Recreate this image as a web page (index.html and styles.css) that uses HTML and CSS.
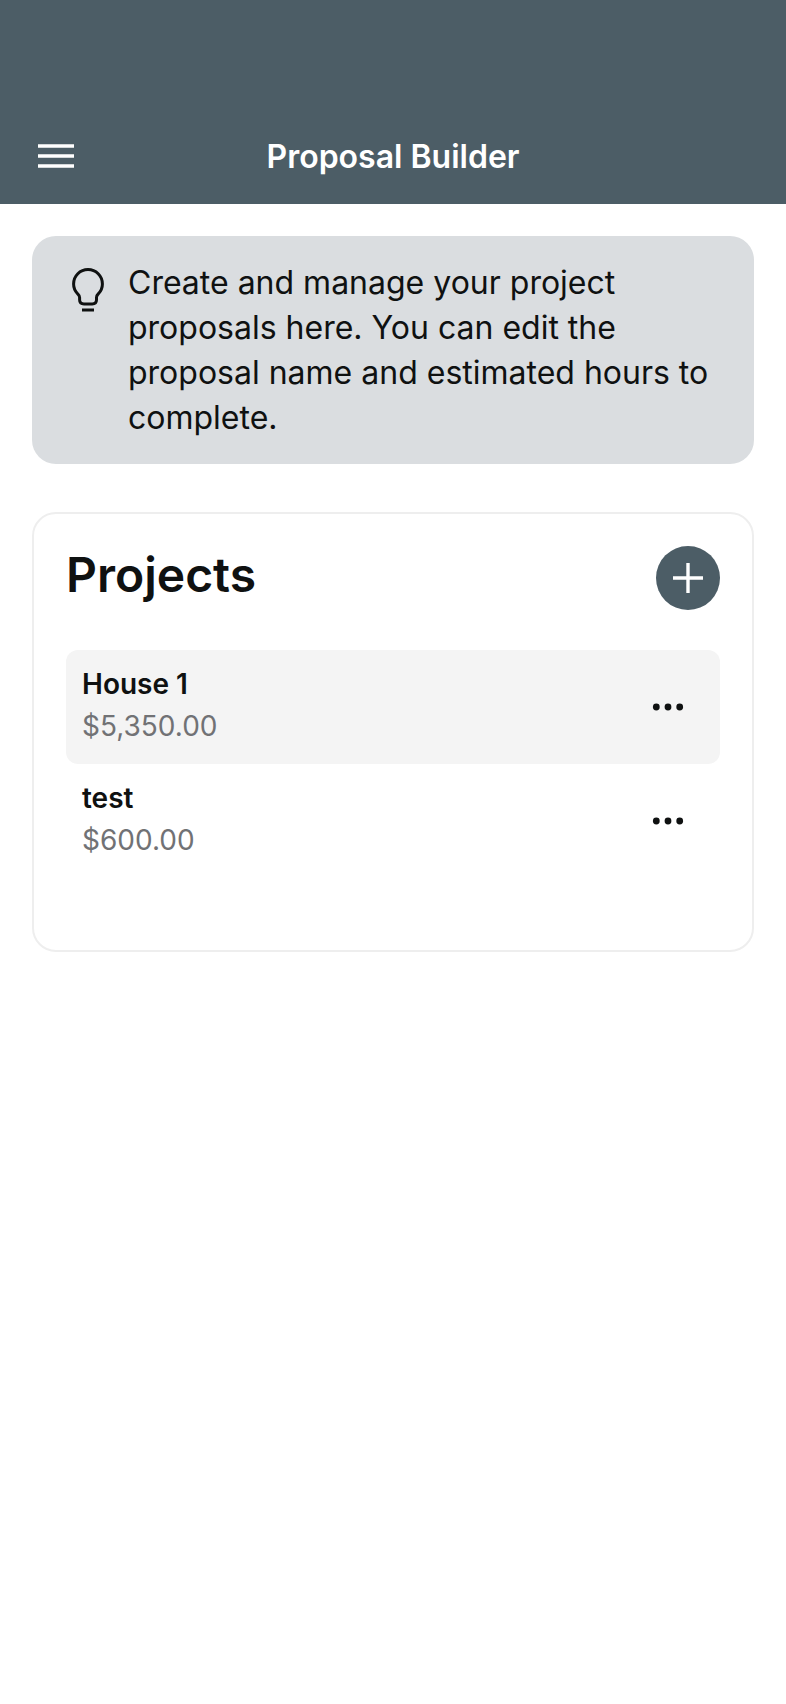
FILE: index.html
```html
<!DOCTYPE html>
<html lang="en">
<head>
<meta charset="utf-8">
<meta name="viewport" content="width=device-width, initial-scale=1">
<title>Proposal Builder</title>
<link rel="stylesheet" href="styles.css">
</head>
<body>
<header class="app-bar">
  <button class="icon-button menu" type="button" aria-label="Open menu">
    <svg width="36" height="24" viewBox="0 0 36 24" stroke="currentColor" stroke-width="3.4" aria-hidden="true"><path d="M0 2H36M0 12H36M0 22H36"/></svg>
  </button>
  <h1 class="app-title">Proposal Builder</h1>
</header>
<main class="content">
  <section class="tip">
    <svg class="tip-icon" width="32" height="44" viewBox="0 0 32 44" fill="none" stroke="currentColor" stroke-width="3" aria-hidden="true">
      <path d="M12 36H20.2Q24.5 36 24.5 31.8V29.5C24.5 27.5 25.3 26.8 26.6 25.5C29 22.8 30.4 19.8 30.4 15.9A14.4 14.4 0 0 0 1.6 15.9C1.6 19.8 3 22.8 5.4 25.5C6.7 26.8 7.6 27.5 7.6 29.5V31.8Q7.6 36 12 36Z"/>
      <path d="M10 42H22"/>
    </svg>
    <p class="tip-text">Create and manage your project proposals here. You can edit the proposal name and estimated hours to complete.</p>
  </section>
  <section class="card">
    <div class="card-head">
      <h2 class="card-title">Projects</h2>
      <button class="icon-button add" type="button" aria-label="Add project">
        <svg width="30" height="30" viewBox="0 0 30 30" stroke="currentColor" stroke-width="3.4" aria-hidden="true"><path d="M0 15H30M15 0V30"/></svg>
      </button>
    </div>
    <ul class="projects">
      <li class="project project-shaded">
        <div class="project-info">
          <h3 class="project-name">House 1</h3>
          <p class="project-amount">$5,350.00</p>
        </div>
        <button class="icon-button more" type="button" aria-label="Options for House 1">
          <svg width="32" height="8" viewBox="0 0 32 8" fill="currentColor" aria-hidden="true"><circle cx="4.3" cy="4" r="3.4"/><circle cx="16" cy="4" r="3.4"/><circle cx="27.7" cy="4" r="3.4"/></svg>
        </button>
      </li>
      <li class="project">
        <div class="project-info">
          <h3 class="project-name">test</h3>
          <p class="project-amount">$600.00</p>
        </div>
        <button class="icon-button more" type="button" aria-label="Options for test">
          <svg width="32" height="8" viewBox="0 0 32 8" fill="currentColor" aria-hidden="true"><circle cx="4.3" cy="4" r="3.4"/><circle cx="16" cy="4" r="3.4"/><circle cx="27.7" cy="4" r="3.4"/></svg>
        </button>
      </li>
    </ul>
  </section>
</main>
</body>
</html>
```
FILE: styles.css
```css
* {
  box-sizing: border-box;
}

body {
  margin: 0;
  background: #fff;
  color: #0f1111;
  font-family: Inter, "Liberation Sans", sans-serif;
}

h1, h2, h3, p, ul {
  margin: 0;
  padding: 0;
}

.icon-button {
  display: flex;
  align-items: center;
  justify-content: center;
  padding: 0;
  border: 0;
  background: none;
  color: inherit;
  cursor: pointer;
}

.app-bar {
  display: grid;
  grid-template-columns: 64px 1fr 64px;
  align-items: center;
  padding: 124px 24px 16px;
  background: #4c5d66;
  color: #fff;
}

.menu {
  height: 64px;
}

.app-title {
  padding-top: 2px;
  font-size: 32px;
  font-weight: 600;
  line-height: 40px;
  text-align: center;
}

.content {
  display: flex;
  flex-direction: column;
  gap: 48px;
  padding: 32px;
}

.tip {
  display: flex;
  align-items: flex-start;
  gap: 24px;
  padding: 24px 32px 24px 40px;
  border-radius: 24px;
  background: #dadde0;
}

.tip-icon {
  flex: none;
  margin-top: 8px;
}

.tip-text {
  font-size: 32px;
  line-height: 45px;
}

.card {
  padding: 32px 32px 72px;
  border: 2px solid #eee;
  border-radius: 24px;
}

.card-head {
  display: flex;
  align-items: flex-start;
  justify-content: space-between;
  margin-bottom: 40px;
}

.card-title {
  font-size: 48px;
  font-weight: 600;
  line-height: 58px;
}

.add {
  width: 64px;
  height: 64px;
  border-radius: 50%;
  background: #4c5d66;
  color: #fff;
}

.projects {
  list-style: none;
}

.project {
  display: flex;
  align-items: center;
  justify-content: space-between;
  padding: 0 20px 0 16px;
  border-radius: 12px;
}

.project-shaded {
  background: #f4f4f4;
}

.project-info {
  padding: 13px 0 17px;
}

.project-name,
.project-amount {
  font-size: 28px;
  line-height: 42px;
}

.project-name {
  font-weight: 600;
}

.project-amount {
  color: #717275;
}

.more {
  width: 64px;
  height: 64px;
}
```
